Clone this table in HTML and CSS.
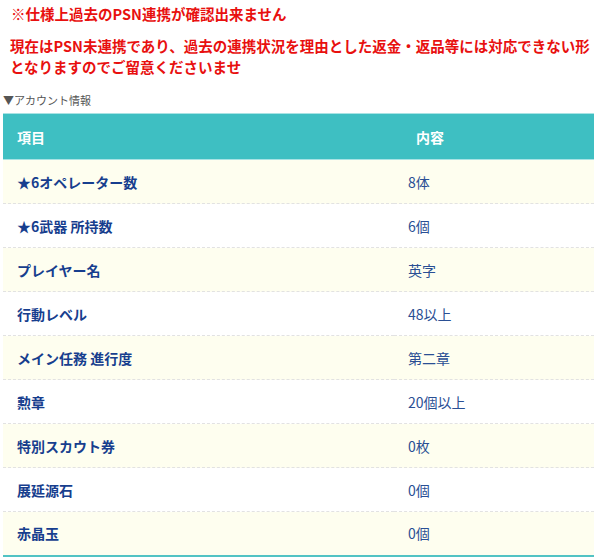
FILE: index.html
```html
<!DOCTYPE html>
<html lang="ja">
<head>
<meta charset="utf-8">
<link rel="stylesheet" href="styles.css">
</head>
<body>
<div class="page">
  <p class="notice notice-head">※仕様上過去のPSN連携が確認出来ません</p>
  <p class="notice notice-body">現在はPSN未連携であり、過去の連携状況を理由とした返金・返品等には対応できない形となりますのでご留意くださいませ</p>
  <div class="caption">▼アカウント情報</div>
  <table class="info">
    <thead>
      <tr><th class="col-item">項目</th><th class="col-value">内容</th></tr>
    </thead>
    <tbody>
      <tr class="odd"><th>★6オペレーター数</th><td>8体</td></tr>
      <tr><th>★6武器 所持数</th><td>6個</td></tr>
      <tr class="odd"><th>プレイヤー名</th><td>英字</td></tr>
      <tr><th>行動レベル</th><td>48以上</td></tr>
      <tr class="odd"><th>メイン任務 進行度</th><td>第二章</td></tr>
      <tr><th>勲章</th><td>20個以上</td></tr>
      <tr class="odd"><th>特別スカウト券</th><td>0枚</td></tr>
      <tr><th>展延源石</th><td>0個</td></tr>
      <tr class="odd last"><th>赤晶玉</th><td>0個</td></tr>
    </tbody>
  </table>
</div>
</body>
</html>
```
FILE: styles.css
```css
* { box-sizing: border-box; }
html, body { margin: 0; padding: 0; background: #fff; }
body {
  font-family: "Noto Sans CJK JP", "Noto Sans", sans-serif;
  color: #1b3d8c;
}
.page { padding: 0 0 0 3px; width: 594px; }
.notice {
  margin: 0;
  color: #e8100f;
  font-weight: bold;
  font-size: 14.5px;
  line-height: 21px;
}
.notice-head { margin-top: 3px; padding-left: 8px; }
.notice-body { margin-top: 11px; padding-left: 7px; }
.caption {
  margin-top: 15px;
  font-size: 11px;
  line-height: 16px;
  color: #555;
}
.info {
  margin-top: 5px;
  width: 591px;
  border-collapse: collapse;
  font-size: 14px;
}
.info thead th {
  background: #3ebfc2;
  color: #fff;
  font-weight: bold;
  text-align: left;
  height: 46px;
  padding: 0 14px;
  border-top: 1px solid #a9e3e4;
  border-bottom: 1px solid #a9e3e4;
}
.info thead th.col-item { width: 391px; }
.info thead th.col-value { padding-left: 22px; }
.info tbody th, .info tbody td {
  height: 44px;
  padding: 0 14px;
  text-align: left;
  border-bottom: 1px dashed #e2e2e2;
}
.info tbody th { font-weight: bold; color: #173e8e; }
.info tbody td { font-weight: normal; color: #2a4f94; }
.info tbody tr.odd { background: #fefeef; }
.info tbody tr.last th, .info tbody tr.last td { border-bottom: 2px solid #52c3c4; }
```
